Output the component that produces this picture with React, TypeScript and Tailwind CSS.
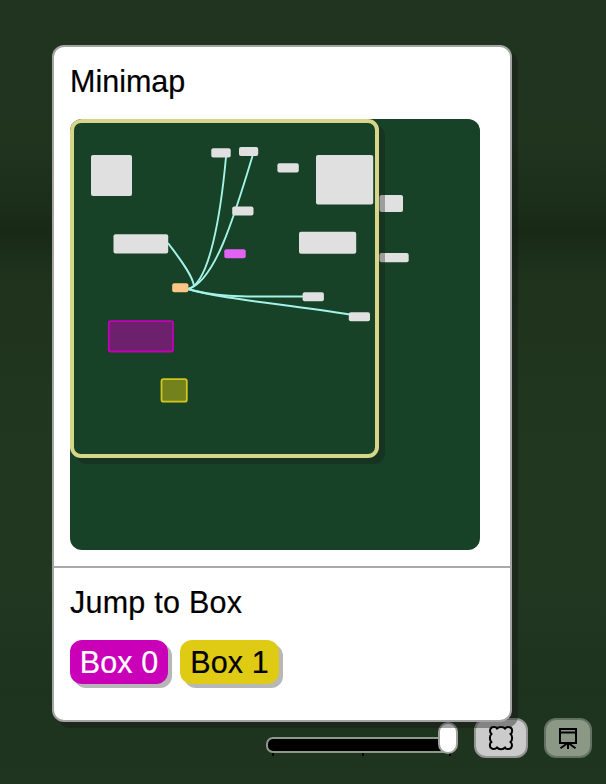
type Node = { x: number; y: number; w: number; h: number; fill?: string };

const nodes: Node[] = [
  { x: 21, y: 36, w: 41, h: 41 },
  { x: 141.3, y: 29.3, w: 19.4, h: 9.2 },
  { x: 169, y: 28, w: 19.2, h: 9 },
  { x: 207.4, y: 44.3, w: 21.4, h: 9.2 },
  { x: 246, y: 36, w: 57.2, h: 49.5 },
  { x: 309.5, y: 76, w: 23.5, h: 17 },
  { x: 309.5, y: 134, w: 29.2, h: 9.2 },
  { x: 162.2, y: 87.4, w: 21.3, h: 9 },
  { x: 43.5, y: 115.2, w: 54.7, h: 19.2 },
  { x: 229, y: 112.8, w: 57.2, h: 22 },
  { x: 154.3, y: 130.3, w: 21.4, h: 9, fill: '#e263f3' },
  { x: 102.2, y: 164.2, w: 16.2, h: 9, fill: '#fdc684' },
  { x: 232.6, y: 173.3, w: 21.3, h: 9 },
  { x: 278.8, y: 193.2, w: 21.2, h: 9 },
];

const links = [
  'M118 170 C140 165 151 92 156 38',
  'M118 170 C144 163 163 102 182.5 37',
  'M98 124 C106 135 124 157 124 168',
  'M118 170 C150 180 190 177 233 177.5',
  'M118 170 C150 180 215 185 280 195.5',
];

function Minimap() {
  return (
    <div className="relative h-[431px] w-[410px] overflow-hidden rounded-xl bg-[#184227]">
      <svg width="410" height="431" viewBox="0 0 410 431" className="block">
        <g fill="none" stroke="#a3f3e8" strokeWidth="1.9">
          {links.map((d) => (
            <path key={d} d={d} />
          ))}
        </g>
        {nodes.map((n, i) => (
          <rect key={i} x={n.x} y={n.y} width={n.w} height={n.h} rx="2" fill={n.fill ?? '#e0e0e0'} />
        ))}
        <rect x="38.8" y="202.2" width="64.2" height="30.3" rx="2" fill="#6d206b" stroke="#c300b8" strokeWidth="1.8" />
        <rect x="91.5" y="260.2" width="25.3" height="22.5" rx="2" fill="#74821d" stroke="#d3c51f" strokeWidth="1.8" />
      </svg>
      <div className="absolute left-0 top-0 h-[339px] w-[309px] rounded-[11px] border-4 border-[#d6d588] shadow-[6px_6px_0_rgba(22,22,22,0.33)]" />
    </div>
  );
}

function FrillyIcon() {
  return (
    <svg width="26" height="26" viewBox="0 0 26 26" fill="none" stroke="#000" strokeWidth="2" strokeLinecap="round" strokeLinejoin="round">
      <path d="M9 3.6 C10.5 1.3 15.5 1.3 17 3.6 C19 1 24.8 1.6 24 6.5 C24 7.8 23.4 8.6 22.4 9 C24.7 10.5 24.7 15.5 22.4 17 C25 19 24.4 24.8 19.5 24 C18.2 24 17.4 23.4 17 22.4 C15.5 24.7 10.5 24.7 9 22.4 C7 25 1.2 24.4 2 19.5 C2 18.2 2.6 17.4 3.6 17 C1.3 15.5 1.3 10.5 3.6 9 C1 7 1.6 1.2 6.5 2 C7.8 2 8.6 2.6 9 3.6Z" />
    </svg>
  );
}

function EaselIcon() {
  return (
    <svg width="20" height="24" viewBox="0 0 20 24" fill="none" stroke="#000" strokeWidth="2">
      <path d="M2 3H18V17H2ZM2 6.5H18" />
      <path d="M10 17V23M9 17.5L2.5 22.3M11 17.5L17.5 22.3" />
    </svg>
  );
}

export default function App() {
  return (
    <div className="h-[784px] w-[606px] overflow-hidden bg-[#20351f] bg-[linear-gradient(180deg,#20341f_0px,#20341e_140px,#1b2e1a_205px,#182a16_232px,#1e321c_275px,#21361f_400px,#213720_590px,#1e331e_690px,#20351f_784px)] pl-[52px] pt-[45px] font-['Liberation_Sans',Arial,sans-serif] text-[30.5px] leading-[36px] text-black [-webkit-text-stroke:0.2px_currentColor]">
      <main className="relative z-10 flex h-[677px] w-[460px] flex-col rounded-xl border-2 border-[#a4a4a4] bg-white shadow-[6px_6px_0_rgba(22,22,22,0.4)]">
        <section className="h-[521px] border-b-2 border-[#a9a9a9] px-4 pt-4">
          <h2 className="mb-5">Minimap</h2>
          <Minimap />
        </section>
        <section className="px-4 pt-4">
          <h2 className="mb-5 tracking-[0.25px]">Jump to Box</h2>
          <div className="flex gap-3 tracking-[0.1px]">
            <button className="h-11 w-[98px] rounded-xl bg-[#ca00b9] pb-px text-white shadow-[4px_4px_0_#b7b7b7]">Box 0</button>
            <button className="h-11 w-[99px] rounded-xl bg-[#dfcb14] pb-px shadow-[4px_4px_0_#b7b7b7]">Box 1</button>
          </div>
        </section>
      </main>
      <footer className="-mt-1 ml-[214px] flex h-10 gap-4">
        <div className="relative mt-[19px] h-4 w-48">
          <div className="h-4 w-[190px] rounded-[7px] border-2 border-[#8d998d] bg-black" />
          <div className="flex justify-between pl-[6px] pr-[7px]">
            <span className="h-[3px] w-[2px] bg-black" />
            <span className="ml-[3px] h-[3px] w-[2px] bg-black" />
            <span className="h-[3px] w-[2px] bg-black" />
          </div>
          <div className="absolute -top-[15px] left-[172px] h-8 w-5 rounded-[10px] border-2 border-[#a0a4a0] bg-white" />
        </div>
        <button className="flex h-10 w-[54px] items-center justify-center rounded-xl border-2 border-[#929592] bg-[#cbcbcb]">
          <FrillyIcon />
        </button>
        <button className="flex h-10 w-12 items-center justify-center rounded-xl border-2 border-[#647264] bg-[#8a9885]">
          <EaselIcon />
        </button>
      </footer>
    </div>
  );
}
